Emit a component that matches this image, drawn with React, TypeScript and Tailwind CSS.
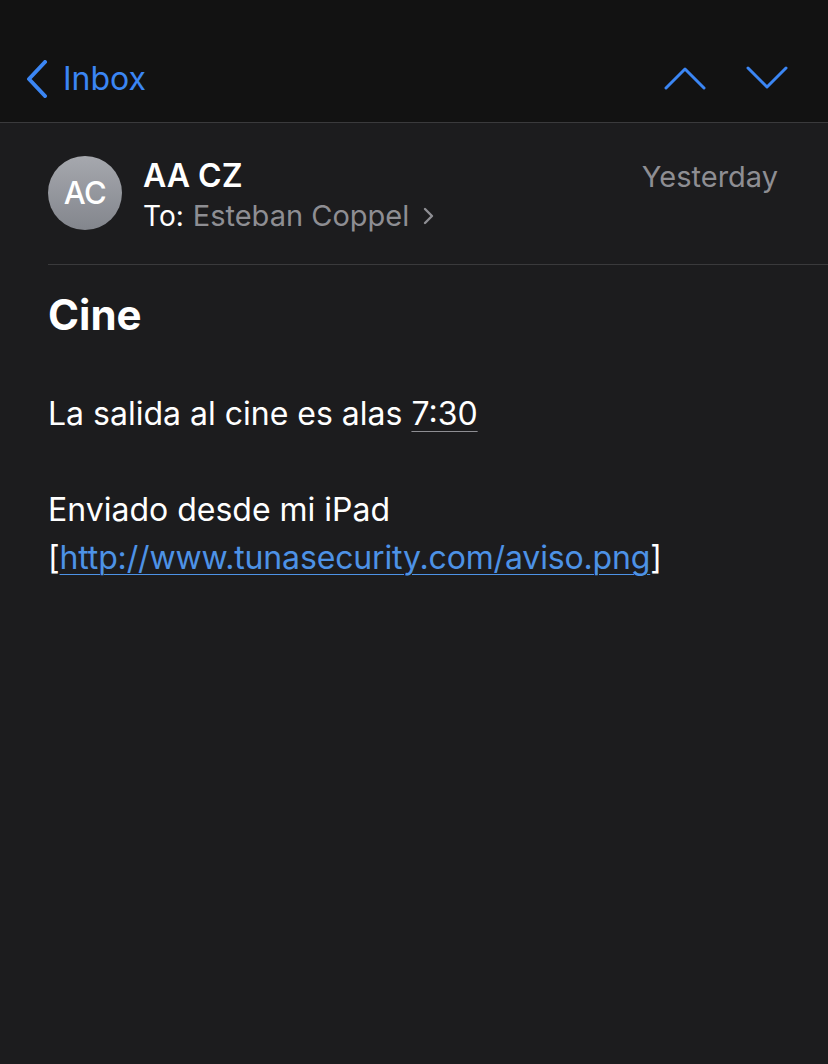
import React from "react";

export default function App() {
  return (
    <div
      className="w-[828px] h-[1064px] bg-[#1c1c1e] text-white overflow-hidden"
      style={{ fontFamily: "Inter, 'Noto Sans', sans-serif" }}
    >
      <div className="h-[123px] bg-[#121212] border-b border-[#3a3a3c] flex items-end pb-[24px]">
        <div className="flex items-center pl-[26px] gap-[15px] text-[#3b86f4]">
          <svg width="22" height="38" viewBox="0 0 22 38" fill="none">
            <path d="M19 2 L3 19 L19 36" stroke="#3b86f4" strokeWidth="4" strokeLinecap="round" strokeLinejoin="round" />
          </svg>
          <span className="text-[32px] leading-none">Inbox</span>
        </div>
        <div className="ml-auto flex items-center gap-[40px] pr-[40px] pb-[8px]">
          <svg width="42" height="24" viewBox="0 0 42 24" fill="none">
            <path d="M2 22 L21 3 L40 22" stroke="#3b86f4" strokeWidth="3" strokeLinecap="round" strokeLinejoin="round" />
          </svg>
          <svg width="42" height="24" viewBox="0 0 42 24" fill="none">
            <path d="M2 2 L21 21 L40 2" stroke="#3b86f4" strokeWidth="3" strokeLinecap="round" strokeLinejoin="round" />
          </svg>
        </div>
      </div>

      <div className="pl-[48px]">
        <div className="flex pt-[33px] pb-[30px] border-b border-[#3a3a3c]">
          <div className="w-[74px] h-[74px] rounded-full bg-gradient-to-b from-[#a6a8ae] to-[#83868d] flex items-center justify-center text-[31px] font-medium tracking-[-0.5px]">
            AC
          </div>
          <div className="ml-[21px] flex-1 pt-[1px]">
            <div className="flex items-baseline">
              <span className="text-[32px] font-semibold leading-[38px]">AA CZ</span>
              <span className="ml-auto pr-[50px] text-[29px] text-[#8e8e93] leading-[38px]">Yesterday</span>
            </div>
            <div className="flex items-center text-[28px] leading-[36px] mt-[2px]">
              <span className="text-white">To:</span>
              <span className="ml-[9px] text-[29px] text-[#8e8e93]">Esteban Coppel</span>
              <svg className="ml-[14px]" width="11" height="18" viewBox="0 0 11 18" fill="none">
                <path d="M2 2 L9 9 L2 16" stroke="#8e8e93" strokeWidth="2.4" strokeLinecap="round" strokeLinejoin="round" />
              </svg>
            </div>
          </div>
        </div>

        <div className="pt-[26px]">
          <div className="text-[42px] font-bold leading-[48px]">Cine</div>
          <div className="mt-[51px] text-[32px] leading-[48px]">
            La salida al cine es alas{" "}
            <span className="underline decoration-[#8e8e93] decoration-1 underline-offset-[6px]">7:30</span>
          </div>
          <div className="mt-[48px] text-[32px] leading-[48px]">
            <div>Enviado desde mi iPad</div>
            <div className="tracking-[-0.15px]">
              [<span className="text-[#4d92e6] underline decoration-1 underline-offset-[5px]">http://www.tunasecurity.com/aviso.png</span>]
            </div>
          </div>
        </div>
      </div>
    </div>
  );
}
